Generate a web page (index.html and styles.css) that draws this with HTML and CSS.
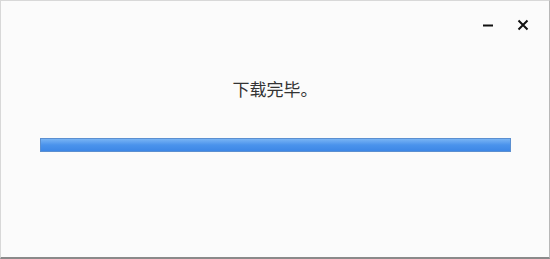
FILE: index.html
```html
<!DOCTYPE html>
<html lang="zh">
<head>
<meta charset="utf-8">
<link rel="stylesheet" href="styles.css">
</head>
<body>
<div class="window">
  <div class="titlebar">
    <button class="ctl min" aria-label="最小化">
      <svg width="12" height="12" viewBox="0 0 12 12"><path d="M1 6.5H11" stroke="#111" stroke-width="2"/></svg>
    </button>
    <button class="ctl close" aria-label="关闭">
      <svg width="12" height="12" viewBox="0 0 12 12"><path d="M1.5 1.5L10.5 10.5M10.5 1.5L1.5 10.5" stroke="#111" stroke-width="2"/></svg>
    </button>
  </div>
  <div class="message">下载完毕。</div>
  <div class="progress"><div class="fill"></div></div>
</div>
</body>
</html>
```
FILE: styles.css
```css
html, body {
  margin: 0;
  padding: 0;
  background: #fbfbfb;
}
.window {
  width: 550px;
  height: 259px;
  box-sizing: border-box;
  border: 1px solid #d8d8d8;
  border-right-color: #b8b8b8;
  border-bottom: 2px solid #8a8a8a;
  background: #fbfbfb;
  display: flex;
  flex-direction: column;
  font-family: "Noto Sans CJK SC", "Noto Sans", sans-serif;
}
.titlebar {
  display: flex;
  justify-content: flex-end;
  gap: 23px;
  padding: 18px 20px 0 0;
  height: 13px;
}
.ctl {
  border: 0;
  background: none;
  padding: 0;
  width: 12px;
  height: 12px;
  display: block;
}
.ctl svg { display: block; }
.message {
  margin-top: 47px;
  text-align: center;
  font-size: 17px;
  line-height: 20px;
  color: #333;
}
.progress {
  margin: 39px 38px 0 39px;
  height: 14px;
  box-sizing: border-box;
  border: 1px solid #5b8fd0;
  background: #e6e6e6;
}
.fill {
  width: 100%;
  height: 100%;
  background: linear-gradient(#78b4f4, #4a93ec 50%, #3d87e6);
}
```
